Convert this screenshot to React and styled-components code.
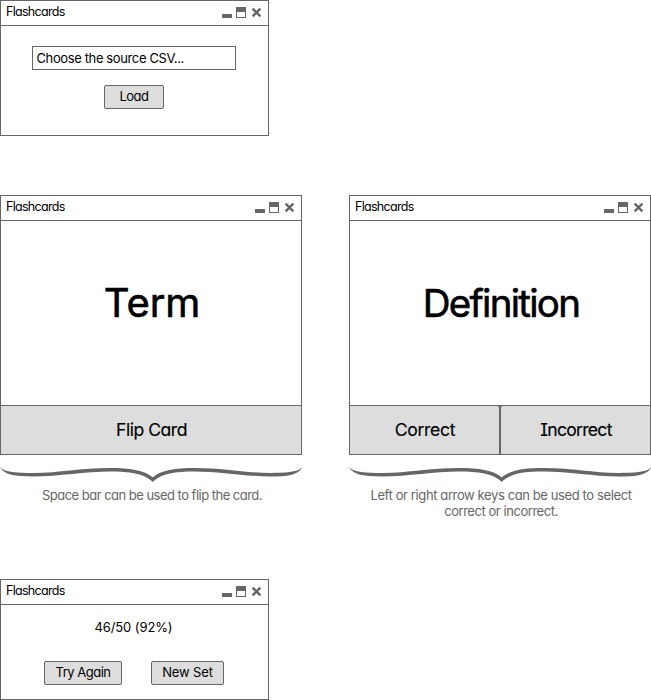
import React from "react";
import styled, { createGlobalStyle } from "styled-components";

const ink = "#666";

const GlobalStyle = createGlobalStyle`
  * { box-sizing: border-box; }
  body { margin: 0; background: #fff; overflow: hidden; }
`;

const Page = styled.main`
  width: 651px;
  height: 700px;
  display: flex;
  flex-direction: column;
  font-family: "Inter", "Liberation Sans", sans-serif;
  font-size: 13px;
  font-feature-settings: "cv11", "cv08";
  color: #000;
  white-space: nowrap;
`;

const CardRow = styled.div`
  display: flex;
  gap: 47px;
  height: 325px;
  margin: 59px 0;
`;

const Column = styled.section`
  width: 302px;
  display: flex;
  flex-direction: column;
`;

const Frame = styled.section`
  flex: none;
  width: ${(p) => p.$width}px;
  height: ${(p) => p.$height}px;
  border: 1px solid ${ink};
  display: flex;
  flex-direction: column;
`;

const TitleBar = styled.header`
  flex: none;
  height: 25px;
  border-bottom: 1px solid ${ink};
  display: flex;
  justify-content: space-between;
  padding: 0 6px 0 5px;
`;

const Title = styled.span`
  font-size: 12.5px;
  line-height: 22px;
  letter-spacing: -0.7px;
`;

const Controls = styled.svg`
  margin-top: 6px;
  width: 40px;
  height: 12px;
  fill: ${ink};
`;

const Body = styled.div`
  flex: 1;
  display: flex;
  flex-direction: column;
  align-items: center;
  padding: ${(p) => p.$top}px 2px 0 0;
`;

const FileField = styled.div`
  width: 204px;
  height: 24px;
  border: 1px solid ${ink};
  padding-left: 4px;
  line-height: 22px;
  letter-spacing: -0.38px;
`;

const Button = styled.button`
  width: ${(p) => p.$width}px;
  height: 24px;
  border: 1px solid ${ink};
  border-radius: 2px;
  background: #ddd;
  color: inherit;
  font: inherit;
  font-feature-settings: inherit;
  line-height: 21px;
  padding: 0 0 1px 1px;
  letter-spacing: ${(p) => p.$tracking}px;
`;

const LoadButton = styled(Button)`
  margin-top: 15px;
`;

const Face = styled.div`
  height: 184px;
  padding: 57px 0 0 2px;
  text-align: center;
  font-size: ${(p) => p.$size}px;
  line-height: 50px;
  color: #000;
  -webkit-text-stroke: 0.6px #000;
  letter-spacing: ${(p) => p.$tracking}px;
`;

const Actions = styled.div`
  height: 49px;
  border-top: 1px solid ${ink};
  display: flex;
  background: ${ink};
  gap: 2px;
`;

const Action = styled.button`
  flex: 1;
  border: 0;
  border-radius: ${(p) => p.$corners || "0"};
  background: #ddd;
  padding: 0 0 1px 1px;
  color: #000;
  font: inherit;
  font-feature-settings: inherit;
  font-size: 17.6px;
  -webkit-text-stroke: 0.15px #000;
  letter-spacing: ${(p) => p.$tracking}px;
`;

const BraceShape = styled.svg`
  display: block;
  flex: none;
  width: 302px;
  height: 16px;
  margin-top: 12px;
  fill: ${ink};
`;

const Caption = styled.p`
  margin: 4px 0 0 2px;
  text-align: center;
  line-height: 16px;
  color: ${ink};
`;

const Line = styled.span`
  display: block;
  letter-spacing: ${(p) => p.$tracking}px;
`;

const Score = styled.div`
  line-height: 16px;
  letter-spacing: -0.1px;
`;

const ResultActions = styled.div`
  display: flex;
  gap: 29px;
  margin-top: 26px;
`;

function Window({ width, height, children }) {
  return (
    <Frame $width={width} $height={height}>
      <TitleBar>
        <Title>Flashcards</Title>
        <Controls viewBox="0 0 40 12">
          <path d="M0 7h10v4H0z" />
          <path fillRule="evenodd" d="M14 0h10v11H14zM15 5v5h8V5z" />
          <path
            d="M30.6 1.6l7.8 7.8M38.4 1.6l-7.8 7.8"
            stroke={ink}
            strokeWidth="2.4"
            fill="none"
          />
        </Controls>
      </TitleBar>
      {children}
    </Frame>
  );
}

function Brace() {
  const half =
    "M0 0C4 5.5 18 6 33 6C60 5.8 80 1 110 1C130 1 144 3 153 10.5V15C143 6 130 4.5 110 4.5C85 4.5 60 9.4 33 9.4C15 9.4 4 8 0 0Z";
  return (
    <BraceShape viewBox="0 0 302 16">
      <path d={half} />
      <path d={half} transform="translate(302 0) scale(-0.9803 1) translate(-0.5 0)" />
    </BraceShape>
  );
}

export default function App() {
  return (
    <>
      <GlobalStyle />
      <Page>
        <Window width={269} height={136}>
          <Body $top={20}>
            <FileField>Choose the source CSV...</FileField>
            <LoadButton $width={60} $tracking={-0.5}>Load</LoadButton>
          </Body>
        </Window>

        <CardRow>
          <Column>
            <Window width={302} height={260}>
              <Face $size={40} $tracking={-0.1}>Term</Face>
              <Actions>
                <Action $tracking={-0.5}>Flip Card</Action>
              </Actions>
            </Window>
            <Brace />
            <Caption>
              <Line $tracking={-0.52}>Space bar can be used to flip the card.</Line>
            </Caption>
          </Column>
          <Column>
            <Window width={302} height={260}>
              <Face $size={38.5} $tracking={-1.7}>Definition</Face>
              <Actions>
                <Action $tracking={-0.3} $corners="0 2px 0 0">Correct</Action>
                <Action $tracking={-0.75} $corners="2px 0 0 0">Incorrect</Action>
              </Actions>
            </Window>
            <Brace />
            <Caption>
              <Line $tracking={-0.39}>Left or right arrow keys can be used to select</Line>
              <Line $tracking={-0.45}>correct or incorrect.</Line>
            </Caption>
          </Column>
        </CardRow>

        <Window width={269} height={121}>
          <Body $top={14}>
            <Score>46/50 (92%)</Score>
            <ResultActions>
              <Button $width={78} $tracking={-0.5}>Try Again</Button>
              <Button $width={73} $tracking={-0.15}>New Set</Button>
            </ResultActions>
          </Body>
        </Window>
      </Page>
    </>
  );
}
